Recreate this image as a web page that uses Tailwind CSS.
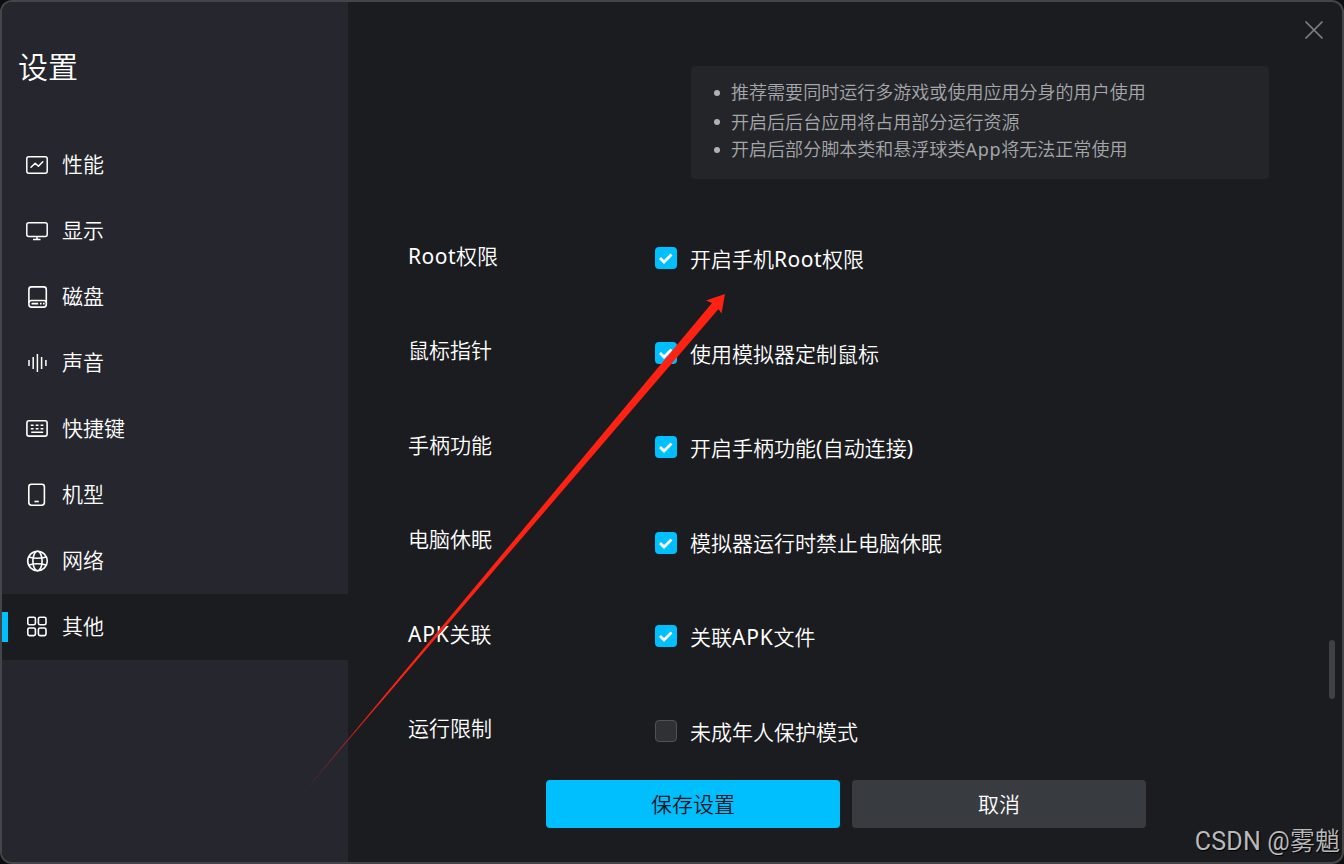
<!DOCTYPE html>
<html lang="zh-CN">
<head>
  <meta charset="UTF-8" />
  <meta name="viewport" content="width=device-width, initial-scale=1.0" />
  <title>设置</title>
  <script src="https://cdn.jsdelivr.net/npm/@tailwindcss/browser@4"></script>
</head>
<body class="bg-[#0d0d10] font-['Noto_Sans','Noto_Sans_CJK_SC',sans-serif] text-[21px] leading-[30px] font-[350] text-white">
  <div class="relative flex h-[864px] w-[1344px] overflow-hidden rounded-xl border-2 border-[#434548] bg-[#1b1c1f]">

    <!-- 侧边栏 -->
    <aside class="w-[346px] shrink-0 bg-[#26272e]">
      <h1 class="flex h-[130px] items-center pl-4 text-[30px]">设置</h1>
      <nav>
        <a class="flex h-[66px] items-center pl-[23px]">
          <svg class="mr-[13px] size-6" fill="none" stroke="currentColor" stroke-width="1.5" viewBox="0 0 24 24">
            <rect x="1.8" y="3.8" width="20.4" height="16.4" rx="2" />
            <path stroke-linecap="round" stroke-linejoin="round" d="M6 14.2l4.2-4 3.2 3L17.8 8.7" />
          </svg>
          <span class="pb-0.5">性能</span>
        </a>
        <a class="flex h-[66px] items-center pl-[23px]">
          <svg class="mr-[13px] size-6" fill="none" stroke="currentColor" stroke-width="1.5" viewBox="0 0 24 24">
            <rect x="1.8" y="3.8" width="20.4" height="13.6" rx="2" />
            <path d="M12 17.4v2.8M8 20.4h7.5" />
          </svg>
          <span class="pb-0.5">显示</span>
        </a>
        <a class="flex h-[66px] items-center pl-[23px]">
          <svg class="mr-[13px] size-6" fill="none" stroke="currentColor" stroke-width="1.6" viewBox="0 0 24 24">
            <rect x="3.9" y="1.9" width="17.4" height="20.2" rx="2.6" />
            <path d="M4.2 17.5q0-2 2.2-2h12.4q2.2 0 2.2 2M6.5 18.6h6.7M15 18.6h1.6M18 18.6h1.6" />
          </svg>
          <span class="pb-0.5">磁盘</span>
        </a>
        <a class="flex h-[66px] items-center pl-[23px]">
          <svg class="mr-[13px] size-6" fill="none" stroke="currentColor" stroke-width="1.5" viewBox="0 0 24 24">
            <path d="M4 9v6M8.2 6v12M12.4 3v18M16.6 6v12M20.9 9v6" />
          </svg>
          <span class="pb-0.5">声音</span>
        </a>
        <a class="flex h-[66px] items-center pl-[23px]">
          <svg class="mr-[13px] size-6" fill="none" stroke="currentColor" stroke-width="1.6" viewBox="0 0 24 24">
            <rect x="1.9" y="3.7" width="20.2" height="15.4" rx="2.2" />
            <path d="M5.8 8.3h2.8M10.7 8.3h2.8M15.6 8.3h2.8M5.8 11.7h2.8M10.7 11.7h2.8M15.6 11.7h2.8M6.2 15.2h12" />
          </svg>
          <span class="pb-0.5">快捷键</span>
        </a>
        <a class="flex h-[66px] items-center pl-[23px]">
          <svg class="mr-[13px] size-6" fill="none" stroke="currentColor" stroke-width="1.6" viewBox="0 0 24 24">
            <rect x="3.8" y="1.2" width="15.6" height="21" rx="2.6" />
            <path d="M9.4 18.5h4.4" />
          </svg>
          <span class="pb-0.5">机型</span>
        </a>
        <a class="flex h-[66px] items-center pl-[23px]">
          <svg class="mr-[13px] size-6" fill="none" stroke="currentColor" stroke-width="1.6" viewBox="0 0 24 24">
            <circle cx="12.5" cy="12" r="9.8" />
            <ellipse cx="12.5" cy="12" rx="4.6" ry="9.8" />
            <path d="M3.8 8q8.7 2.5 17.4 0M3.8 16q8.7-2.5 17.4 0" />
          </svg>
          <span class="pb-0.5">网络</span>
        </a>
        <a class="relative flex h-[66px] items-center bg-[#1b1c1f] pl-[23px]">
          <span class="absolute top-[18px] left-0 h-[30px] w-1.5 bg-[#00bfff]"></span>
          <svg class="mr-[13px] size-6" fill="none" stroke="currentColor" stroke-width="1.6" viewBox="0 0 24 24">
            <rect x="2.8" y="2.2" width="7.6" height="7.6" rx="1.6" />
            <rect x="13.4" y="2.2" width="7.6" height="7.6" rx="1.6" />
            <rect x="2.8" y="13" width="7.6" height="7.6" rx="1.6" />
            <rect x="13.4" y="13" width="7.6" height="7.6" rx="1.6" />
          </svg>
          <span class="pb-0.5">其他</span>
        </a>
      </nav>
    </aside>

    <!-- 设置内容 -->
    <main class="flex flex-1 flex-col">
      <ul class="mt-16 ml-[343px] h-[113px] w-[578px] rounded bg-[#242528] pt-3 pl-[23px] text-[18.05px] leading-7 text-[#a5a7ab]">
        <li class="flex h-[29px] items-center gap-[11px]"><i class="size-1.5 rounded-full bg-[#b0b1b4]"></i><span class="pb-px">推荐需要同时运行多游戏或使用应用分身的用户使用</span></li>
        <li class="flex h-[29px] items-center gap-[11px]"><i class="size-1.5 rounded-full bg-[#b0b1b4]"></i>开启后后台应用将占用部分运行资源</li>
        <li class="flex h-7 items-center gap-[11px]"><i class="size-1.5 rounded-full bg-[#b0b1b4]"></i><span class="pb-0.5">开启后部分脚本类和悬浮球类<span class="font-normal tracking-[0.7px]">App</span>将无法正常使用</span></li>
      </ul>

      <div class="mt-[33px] ml-[60px] grid auto-rows-[94.5px] grid-cols-[247px_1fr]">
        <div class="pt-[29px]"><span class="font-normal tracking-[0.5px]">Root</span>权限</div>
        <label class="flex h-[94px] items-center gap-[13px] pb-[3px]">
          <svg class="size-[22px]" viewBox="0 0 22 22"><rect width="22" height="22" rx="4" fill="#00bfff" /><path d="M5 11l4 4 7.5-7.5" fill="none" stroke="#fff" stroke-width="2.8" /></svg>
          <span class="pt-[3px]">开启手机<span class="font-normal tracking-[0.5px]">Root</span>权限</span>
        </label>
        <div class="pt-[28.5px]">鼠标指针</div>
        <label class="flex h-[94px] items-center gap-[13px] pb-0.5">
          <svg class="size-[22px]" viewBox="0 0 22 22"><rect width="22" height="22" rx="4" fill="#00bfff" /><path d="M5 11l4 4 7.5-7.5" fill="none" stroke="#fff" stroke-width="2.8" /></svg>
          <span class="pt-0.5">使用模拟器定制鼠标</span>
        </label>
        <div class="pt-[28.5px]">手柄功能</div>
        <label class="flex h-[94px] items-center gap-[13px] pb-[3px]">
          <svg class="size-[22px]" viewBox="0 0 22 22"><rect width="22" height="22" rx="4" fill="#00bfff" /><path d="M5 11l4 4 7.5-7.5" fill="none" stroke="#fff" stroke-width="2.8" /></svg>
          <span class="pt-[3px]">开启手柄功能<span class="font-normal tracking-[0.5px]">(</span>自动连接<span class="font-normal tracking-[0.5px]">)</span></span>
        </label>
        <div class="pt-7">电脑休眠</div>
        <label class="flex h-[94px] items-center gap-[13px]">
          <svg class="size-[22px]" viewBox="0 0 22 22"><rect width="22" height="22" rx="4" fill="#00bfff" /><path d="M5 11l4 4 7.5-7.5" fill="none" stroke="#fff" stroke-width="2.8" /></svg>
          <span>模拟器运行时禁止电脑休眠</span>
        </label>
        <div class="pt-[29px]"><span class="font-normal tracking-[0.8px]">APK</span>关联</div>
        <label class="flex h-[94px] items-center gap-[13px] pb-[3px]">
          <svg class="size-[22px]" viewBox="0 0 22 22"><rect width="22" height="22" rx="4" fill="#00bfff" /><path d="M5 11l4 4 7.5-7.5" fill="none" stroke="#fff" stroke-width="2.8" /></svg>
          <span class="pt-[3px]">关联<span class="font-normal tracking-[0.8px]">APK</span>文件</span>
        </label>
        <div class="pt-7">运行限制</div>
        <label class="flex h-[94px] items-center gap-[13px] pb-px">
          <span class="size-[22px] rounded border border-[#505155] bg-[#303135]"></span>
          <span class="pt-px">未成年人保护模式</span>
        </label>
      </div>

      <div class="mt-px ml-[198px] flex gap-3">
        <button class="h-12 w-[294px] rounded bg-[#00bfff] text-[#0c1622]">保存设置</button>
        <button class="h-12 w-[294px] rounded bg-[#383c40]">取消</button>
      </div>
    </main>

    <!-- 关闭按钮 -->
    <button class="absolute top-[18px] right-[18px]">
      <svg class="size-5" fill="none" stroke="#808184" stroke-width="1.7" viewBox="0 0 20 20">
        <path d="M1.5 1.5l17 17M18.5 1.5l-17 17" />
      </svg>
    </button>

    <!-- 滚动条 -->
    <div class="absolute top-[638px] right-[7px] h-[59px] w-1.5 rounded-full bg-[#3f4043]"></div>

    <!-- 箭头 -->
    <svg class="pointer-events-none absolute -top-0.5 -left-0.5 h-[864px] w-[1344px]" viewBox="0 0 1344 864">
      <defs>
        <linearGradient id="arrowFade" gradientUnits="userSpaceOnUse" x1="303" y1="793" x2="725" y2="294">
          <stop offset="0" stop-color="#ff2213" stop-opacity="0.3" />
          <stop offset="0.2" stop-color="#ff2213" />
        </linearGradient>
      </defs>
      <path d="M303 793L712 303L706 300.5L725 294L721.5 313.5L718.5 309Z" fill="url(#arrowFade)" />
    </svg>

    <!-- 水印 -->
    <div class="absolute right-0.5 bottom-[3px] font-['Roboto','Noto_Sans_CJK_SC',sans-serif] text-[25px] leading-[34px] whitespace-nowrap text-[#b9babb] [text-shadow:1px_1px_1px_#000]"><span class="font-normal tracking-[0.2px]">CSDN @</span>雾魈</div>
  </div>
</body>
</html>
